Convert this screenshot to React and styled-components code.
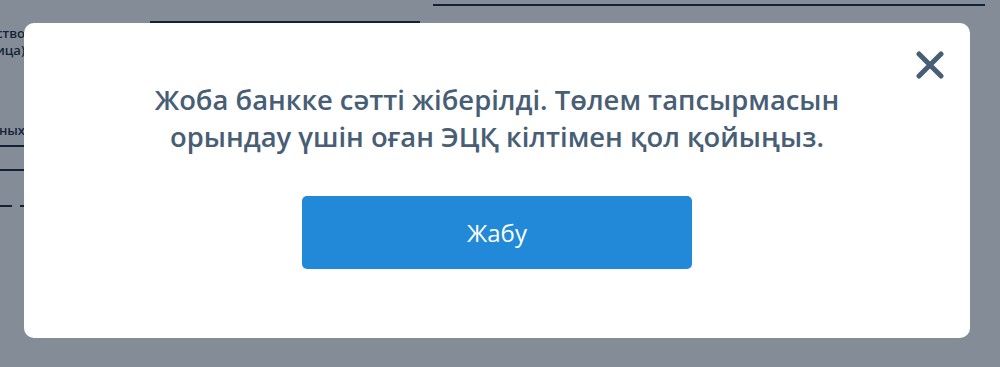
import React from "react";
import styled, { createGlobalStyle } from "styled-components";

const GlobalStyle = createGlobalStyle`
  html, body {
    margin: 0;
    padding: 0;
    height: 100%;
  }
  body {
    font-family: "Open Sans", "Noto Sans", sans-serif;
    background: #ffffff;
    overflow: hidden;
  }
`;

const Page = styled.div`
  position: relative;
  width: 1000px;
  height: 367px;
  overflow: hidden;
  background: #ffffff;
`;

const Form = styled.div`
  display: flex;
  flex-direction: column;
  font-size: 13px;
  font-weight: 600;
  color: #1f2d3b;
`;

const FieldRow = styled.div`
  display: flex;
  align-items: flex-end;
  height: ${({ h }) => h}px;
  padding-left: ${({ indent }) => indent || 0}px;
`;

const Underline = styled.div`
  width: ${({ w }) => w}px;
  border-bottom: 2px solid #1b2b3b;
`;

const Label = styled.div`
  width: 25px;
  display: flex;
  flex-direction: column;
  align-items: flex-end;
  overflow: hidden;
  line-height: 17px;
  white-space: nowrap;
`;

const Dashes = styled.div`
  display: flex;
  gap: 8px;
  height: 2px;
  span {
    width: 12px;
    background: #1b2b3b;
  }
`;

const Overlay = styled.div`
  position: absolute;
  inset: 0;
  background: rgba(10, 28, 48, 0.5);
  display: flex;
  align-items: flex-start;
  padding: 23px 0 0 24px;
`;

const Modal = styled.div`
  position: relative;
  width: 946px;
  height: 315px;
  box-sizing: border-box;
  background: #ffffff;
  border-radius: 10px;
  display: flex;
  flex-direction: column;
  align-items: center;
  padding-top: 58px;
`;

const Title = styled.h2`
  margin: 0;
  font-size: 27.4px;
  line-height: 37px;
  font-weight: 600;
  color: #475e75;
  text-align: center;
`;

const CloseButton = styled.button`
  position: absolute;
  top: 27px;
  right: 25px;
  width: 30px;
  height: 30px;
  padding: 0;
  border: 0;
  background: transparent;
  cursor: pointer;
  display: flex;
  align-items: center;
  justify-content: center;
`;

const PrimaryButton = styled.button`
  margin-top: 41px;
  width: 390px;
  height: 73px;
  border: 0;
  border-radius: 5px;
  background: #2289d9;
  color: #ffffff;
  font-family: "Open Sans", "Noto Sans", sans-serif;
  font-size: 24px;
  cursor: pointer;
`;

export default function App() {
  return (
    <>
      <GlobalStyle />
      <Page>
        <Form>
          <FieldRow h={6} indent={433}>
            <Underline w={552} />
          </FieldRow>
          <FieldRow h={17} indent={150}>
            <Underline w={270} />
          </FieldRow>
          <FieldRow h={36}>
            <Label>
              <span>ество</span>
              <span>лица)</span>
            </Label>
          </FieldRow>
          <FieldRow h={80}>
            <Label>
              <span>данных</span>
            </Label>
          </FieldRow>
          <FieldRow h={8}>
            <Underline w={30} />
          </FieldRow>
          <FieldRow h={24}>
            <Underline w={30} />
          </FieldRow>
          <FieldRow h={36}>
            <Dashes>
              <span />
              <span />
            </Dashes>
          </FieldRow>
        </Form>
        <Overlay>
          <Modal>
            <CloseButton aria-label="Жабу">
              <svg width="28" height="28" viewBox="0 0 28 28">
                <path
                  d="M3 3 L25 25 M25 3 L3 25"
                  stroke="#475e75"
                  strokeWidth="5"
                  strokeLinecap="round"
                  fill="none"
                />
              </svg>
            </CloseButton>
            <Title>
              Жоба банкке сәтті жіберілді. Төлем тапсырмасын
              <br />
              орындау үшін оған ЭЦҚ кілтімен қол қойыңыз.
            </Title>
            <PrimaryButton>Жабу</PrimaryButton>
          </Modal>
        </Overlay>
      </Page>
    </>
  );
}
